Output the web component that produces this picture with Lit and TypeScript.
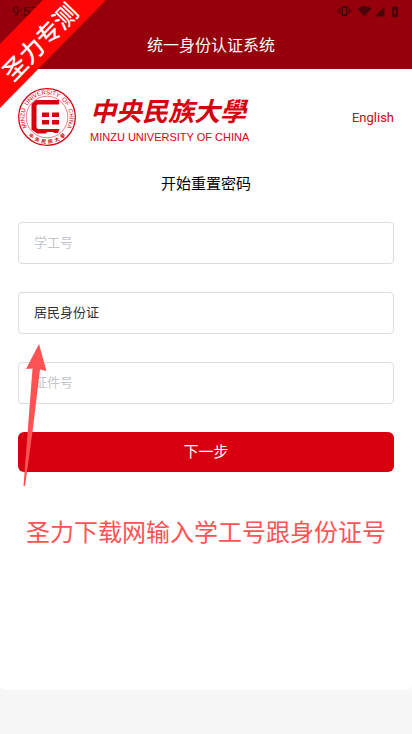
import { LitElement, html, css, svg } from "lit";
import { customElement } from "lit/decorators.js";

const seal = svg`
  <g fill="none" stroke="#d7000f">
    <circle cx="30" cy="30" r="28.300" stroke-width="1.300"/>
    <circle cx="30" cy="30" r="20.800" stroke-width="0.500"/>
  </g>
  <path fill="#d7000f" d="M19 13H42V17.500H21Q19.500 17.500 19.500 19V40Q19.500 42 21.500 42H42.500L41 46H37.500L36 45H30L29 46.500H20L14.500 42.500V17Z"/>
  <path fill="#d7000f" d="M25 25.500H32V30H25ZM35 25.500H42V30H35ZM25 33H32V37.500H25ZM35 33H42V37.500H35Z"/>
  <path id="arc-top" fill="none" d="M11 42A22.500 22.500 0 1 1 49 42"/>
  <path id="arc-bottom" fill="none" d="M6 41.500A26.700 26.700 0 0 0 54 41.500"/>
  <text class="seal-en"><textPath href="#arc-top" startOffset="50%" text-anchor="middle">MINZU  UNIVERSITY  OF  CHINA</textPath></text>
  <text class="seal-zh"><textPath href="#arc-bottom" startOffset="50%" text-anchor="middle">中  央  民  族  大  學</textPath></text>
`;

@customElement("app-root")
export class AppRoot extends LitElement {
  static styles = css`
    :host {
      display: block;
      position: relative;
      min-height: 100vh;
      background: #f7f7f7;
      font-family: Roboto, "Noto Sans CJK SC", sans-serif;
      color: #000;
    }
    * { box-sizing: border-box; }
    .status {
      display: flex;
      justify-content: space-between;
      align-items: center;
      height: 22px;
      padding: 0 12px;
      font-size: 13px;
      color: #4a0508;
    }
    .status svg { display: block; }
    header { background: #96000a; color: #fff; }
    h1 {
      margin: 0;
      height: 47px;
      line-height: 47px;
      font-size: 16px;
      font-weight: 400;
      text-align: center;
      padding-left: 10px;
    }
    main {
      background: #fff;
      border-radius: 0 0 6px 6px;
      padding: 18px 18px 140px;
    }
    .brand { display: flex; align-items: center; height: 60px; }
    .seal { flex: none; margin-left: -1px; }
    .seal text { fill: #d7000f; white-space: pre; }
    .seal-en { font: 6px "Liberation Sans", sans-serif; }
    .seal-zh { font: 700 5px "Noto Sans CJK TC", sans-serif; }
    .name { margin-left: 13px; color: #d7000f; white-space: nowrap; }
    .name-zh {
      font: italic 700 26px/40px "Noto Sans CJK TC", sans-serif;
    }
    .name-en { font: 11px/14px "Liberation Sans", sans-serif; }
    .lang {
      margin-left: auto;
      font-size: 13px;
      color: #d7000f;
      text-decoration: none;
    }
    h2 {
      margin: 23px 0 0;
      font-size: 15px;
      line-height: 28px;
      font-weight: 400;
      text-align: center;
    }
    form { display: grid; gap: 28px; margin-top: 24px; }
    .field {
      width: 100%;
      height: 42px;
      padding: 0 15px 2px;
      border: 1px solid #dcdcde;
      border-radius: 4px;
      background: #fff;
      font: 13px Roboto, "Noto Sans CJK SC", sans-serif;
      color: #303133;
      appearance: none;
      outline: none;
    }
    .field::placeholder { color: #c4c6ca; opacity: 1; }
    .next {
      height: 40px;
      padding: 0 0 4px;
      border: 0;
      border-radius: 6px;
      background: #d7000f;
      color: #fff;
      font: 15px Roboto, "Noto Sans CJK SC", sans-serif;
    }
    .note {
      margin: 40px -18px 0;
      font-size: 24px;
      line-height: 38px;
      text-align: center;
      color: #ff5252;
      font-family: "Noto Sans CJK SC", sans-serif;
    }
    .arrow, .ribbon { position: absolute; pointer-events: none; }
    .arrow { left: 20px; top: 343px; }
    .ribbon { left: 0; top: 0; overflow: visible; }
    .ribbon text {
      fill: #fff;
      font: 500 24px "Noto Sans CJK SC", sans-serif;
    }
  `;

  render() {
    return html`
      <header>
        <div class="status">
          <span>9:57</span>
          <svg width="64" height="14" viewBox="0 0 64 14" fill="#4a0508">
            <path d="M5.500 2H11.500V12H5.500ZM7 4V10H10V4Z" fill-rule="evenodd"/>
            <path d="M3 4H4.500V10H3ZM1 5.500H2.200V8.500H1ZM12.500 4H14V10H12.500ZM14.800 5.500H16V8.500H14.800Z"/>
            <path d="M21.500 4.500Q28.500 -0.500 35.500 4.500L28.500 12.500Z"/>
            <path d="M38.500 12.500L48.500 2.500V12.500Z"/>
            <path d="M56 3H58V2H60V3H62V13H56ZM59.500 4.500L57 8.500H58.700L58.300 11.500L61 7.500H59.300Z" fill-rule="evenodd"/>
          </svg>
        </div>
        <h1>统一身份认证系统</h1>
      </header>
      <main>
        <div class="brand">
          <svg class="seal" width="60" height="60" viewBox="0 0 60 60">${seal}</svg>
          <div class="name">
            <div class="name-zh">中央民族大學</div>
            <div class="name-en">MINZU UNIVERSITY OF CHINA</div>
          </div>
          <a class="lang" href="#">English</a>
        </div>
        <h2>开始重置密码</h2>
        <form @submit=${(e: Event) => e.preventDefault()}>
          <input class="field" type="text" placeholder="学工号" aria-label="学工号">
          <select class="field" aria-label="证件类型">
            <option>居民身份证</option>
          </select>
          <input class="field" type="text" placeholder="证件号" aria-label="证件号">
          <button class="next" type="submit">下一步</button>
        </form>
        <p class="note">圣力下载网输入学工号跟身份证号</p>
      </main>
      <svg class="arrow" width="30" height="146" viewBox="0 0 30 146">
        <path fill="#ff5252" d="M19 1L26.500 28L20 26.500L13 85L5 143H3.500L12.500 25.500L6 26Z"/>
      </svg>
      <svg class="ribbon" width="110" height="110" viewBox="0 0 110 110">
        <path fill="#ff0505" d="M43 0H106L0 108V44Z"/>
        <text transform="translate(40 42) rotate(-46)" text-anchor="middle" dy="9">圣力专测</text>
      </svg>
    `;
  }
}
